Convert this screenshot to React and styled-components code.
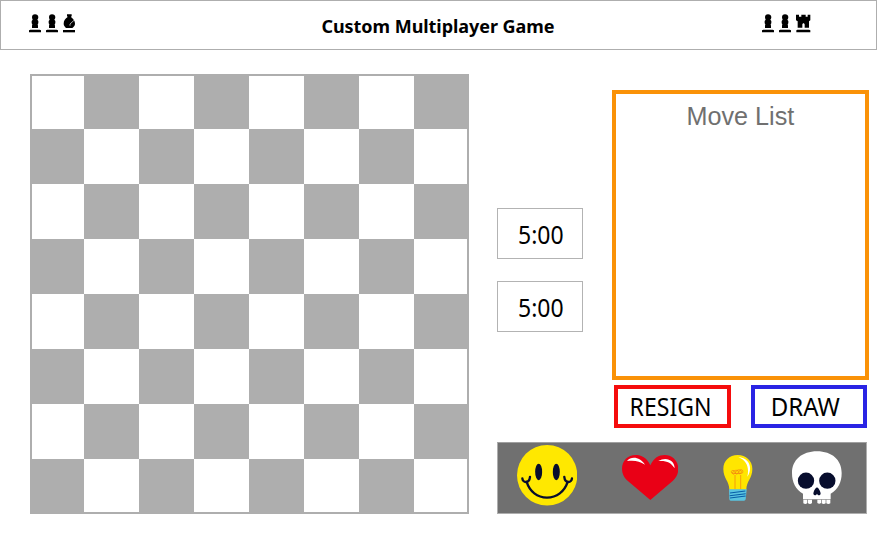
import React from "react";
import styled, { createGlobalStyle } from "styled-components";

const GlobalStyle = createGlobalStyle`
  * { box-sizing: border-box; }
  body { margin: 0; background: #fff; color: #000; font-family: "Noto Sans", "Open Sans", sans-serif; }
  svg { display: block; flex: none; }
`;

const Page = styled.div`
  width: 877px;
  height: 540px;
  overflow: hidden;
`;

const Header = styled.header`
  height: 50px;
  border: 1px solid #aeaeae;
  display: flex;
  justify-content: space-between;
  padding: 13px 65px 0 28px;
`;

const Captured = styled.div`
  display: flex;
  width: ${(p) => p.$width}px;
`;

const Title = styled.h1`
  margin: 0;
  padding-left: 37px;
  font-size: 18px;
  line-height: 24px;
  font-weight: 700;
  white-space: nowrap;
  letter-spacing: ${(p) => p.$spacing}px;
`;

const Main = styled.main`
  display: flex;
  padding: 24px 0 0 29.5px;
`;

const Board = styled.div`
  flex: none;
  width: 439.4px;
  height: 439.6px;
  display: grid;
  grid-template: repeat(8, 1fr) / repeat(8, 1fr);
  outline: 2px solid #aeaeae;
  outline-offset: -2px;
`;

const Square = styled.div`
  background: ${(p) => (p.$dark ? "#aeaeae" : "#fff")};
`;

const Side = styled.section`
  margin-left: 28px;
  width: 372px;
`;

const Play = styled.div`
  display: flex;
  height: 368px;
`;

const Clocks = styled.div`
  width: 86px;
  padding-top: 134px;
  display: flex;
  flex-direction: column;
  gap: 22px;
`;

const Clock = styled.div`
  height: 51px;
  border: 1px solid #b3b3b3;
  padding-left: 2px;
  font-size: 25px;
  line-height: 50px;
  text-align: center;
`;

const Narrow = styled.span`
  display: inline-block;
  transform: scaleX(${(p) => p.$scale});
`;

const Panel = styled.div`
  margin-left: 29px;
  padding-top: 15.5px;
  width: 257px;
`;

const MoveList = styled.div`
  height: 290px;
  border: 4px solid #fa9207;
  padding-top: 7px;
  text-align: center;
  color: #707070;
  font: 25.2px/30px "Liberation Sans", Arial, sans-serif;
`;

const Actions = styled.div`
  display: flex;
  gap: 20px;
  padding: 5.5px 0 0 2px;
`;

const Action = styled.button`
  flex: none;
  width: ${(p) => p.$width}px;
  height: 43px;
  border: 4px solid ${(p) => p.$color};
  padding: 0 ${(p) => p.$inset}px 0 0;
  background: #fff;
  color: #000;
  font: 400 24.5px/34px "Noto Sans", "Open Sans", sans-serif;
  white-space: nowrap;
  display: flex;
  align-items: center;
  justify-content: center;
`;

const Emotes = styled.div`
  width: 370px;
  height: 71.5px;
  border: 1px solid #aeaeae;
  border-top-color: #a0a0a0;
  background: #707070;
  display: grid;
  grid-template-columns: 105px 101px 69px 1fr;
  padding-left: 19px;
`;

const Emote = styled.div`
  padding-top: ${(p) => p.$top}px;
`;

const Pawn = () => (
  <svg width="17" height="19" viewBox="27 42 51 57">
    <path d="M45 43c-6 0-9 4-9 9 0 3 1 5 2 7l-3 4v7l2 3-1 4v7h18v-7l-1-4 2-3v-7l-3-4c2-2 3-4 3-7 0-5-4-9-10-9Z" />
    <path d="M31 89h28l4 2v6H27v-6Z" />
  </svg>
);

const Bishop = () => (
  <svg width="13" height="19" viewBox="129 42 39 57">
    <path d="M141 43h14v5l-2 3c7 6 12 12 12 20 0 5-3 9-8 13h-19c-4-4-7-8-7-13 0-9 5-15 12-20l-2-3Z" />
    <path d="m162 61-12 11v5" fill="none" stroke="#fff" strokeWidth="2" />
    <path d="M129 90h36v7h-36Z" />
  </svg>
);

const Rook = () => (
  <svg width="15" height="19" viewBox="138 42 45 57">
    <path d="M138 44h9v6h7v-6h13v6h6v-6h8v17l-4 3v19h-13v-9c0-6-7-6-7 0v9h-14V64l-5-3Z" />
    <path d="M142 89h35l4 2v6h-42v-6Z" />
  </svg>
);

const Smile = () => (
  <svg width="60.3" height="60.6" viewBox="50 21 181 182">
    <ellipse cx="140.500" cy="112" rx="90.500" ry="91" fill="#ffe800" />
    <ellipse cx="115" cy="102" rx="10.500" ry="25" fill="#070d2d" />
    <ellipse cx="168" cy="102" rx="10.500" ry="25" fill="#070d2d" />
    <g fill="none" stroke="#070d2d" strokeWidth="7" strokeLinecap="round">
      <path d="M79 132c9 29 32 47 61 47s53-18 62-47" />
      <path d="M66 121c0 14 21 17 23-4M192 117c2 21 23 18 23 4" />
    </g>
  </svg>
);

const Heart = () => (
  <svg width="56.3" height="45" viewBox="36 52 169 135">
    <path d="M121 83C110 59 94 52 77 52c-24 0-41 17-41 42 0 14 6 25 15 34l70 59 68-58c10-9 16-21 16-35 0-24-17-42-41-42-18 0-32 8-43 31Z" fill="#e90016" />
    <path d="M51 70c13-16 40-12 54 11-16-11-32-14-54-11ZM145 70c22-14 49-4 49 22-10-17-24-24-49-22Z" fill="#fff" />
  </svg>
);

const Bulb = () => (
  <svg width="29.7" height="45.7" viewBox="40 52 89 137">
    <path d="M59 156c0-26-18-33-18-62 0-25 18-42 43-42s44 17 44 42c0 29-18 36-18 62Z" fill="#ffe600" />
    <path d="M86 58c32 2 45 33 27 59 6-28-1-48-27-59Z" fill="#fff" />
    <g fill="none" stroke="#f17a13" strokeWidth="2">
      <path d="M76 154v-42M93 154v-42M66 106c-5-10 10-10 10-2s-10 7-7 0 17-9 17-1-11 8-8 0 17-9 17-1-10 8-7 0 14-8 11 3c-2 4-24 3-33 1" />
    </g>
    <path d="M58 155h53l-3 30q-1 4-5 4H63q-4 0-4-4Z" fill="#5ac4e0" />
    <path d="m61 166 46-6m-47 14 48-6m-47 13 47-6" fill="none" stroke="#075da8" strokeWidth="3" />
  </svg>
);

const Skull = () => (
  <svg width="50" height="53.7" viewBox="37 39 150 161">
    <path d="M112 40c-45 0-75 26-75 65 0 28 11 49 33 62v17h83v-17c22-12 33-34 33-62 0-39-29-65-74-65Z" fill="#fff" />
    <path d="M71 185h12v10q-5 5-12 1ZM85 185h12v10q-5 5-12 1ZM113 185h11v10q-5 4-11 0ZM126 185h12v11q-6 4-12 0ZM140 185h12v11q-6 4-12 0Z" fill="#fff" />
    <g fill="#070d2d">
      <circle cx="79" cy="128" r="24.500" />
      <circle cx="143" cy="128" r="24.500" />
      <path d="M112 148c7 4 11 15 11 20-3 6-8 5-11-1-3 6-8 7-11 1 0-6 4-16 11-20Z" />
    </g>
  </svg>
);

const squares = Array.from({ length: 64 }, (_, i) => (Math.floor(i / 8) + i) % 2 === 1);

export default function App() {
  return (
    <Page>
      <GlobalStyle />
      <Header>
        <Captured $width={48}>
          <Pawn />
          <Pawn />
          <Bishop />
        </Captured>
        <Title $spacing={-0.05}>Custom Multiplayer Game</Title>
        <Captured $width={49}>
          <Pawn />
          <Pawn />
          <Rook />
        </Captured>
      </Header>
      <Main>
        <Board>
          {squares.map((dark, i) => (
            <Square key={i} $dark={dark} />
          ))}
        </Board>
        <Side>
          <Play>
            <Clocks>
              <Clock><Narrow $scale={0.92}>5:00</Narrow></Clock>
              <Clock><Narrow $scale={0.92}>5:00</Narrow></Clock>
            </Clocks>
            <Panel>
              <MoveList>Move List</MoveList>
              <Actions>
                <Action $width={117} $color="#f50c0d" $inset={3}>
                  <Narrow $scale={0.94}>RESIGN</Narrow>
                </Action>
                <Action $width={116} $color="#2a24e4" $inset={7}>
                  <Narrow $scale={0.98}>DRAW</Narrow>
                </Action>
              </Actions>
            </Panel>
          </Play>
          <Emotes>
            <Emote $top={2}><Smile /></Emote>
            <Emote $top={12.3}><Heart /></Emote>
            <Emote $top={12.3}><Bulb /></Emote>
            <Emote $top={8}><Skull /></Emote>
          </Emotes>
        </Side>
      </Main>
    </Page>
  );
}
